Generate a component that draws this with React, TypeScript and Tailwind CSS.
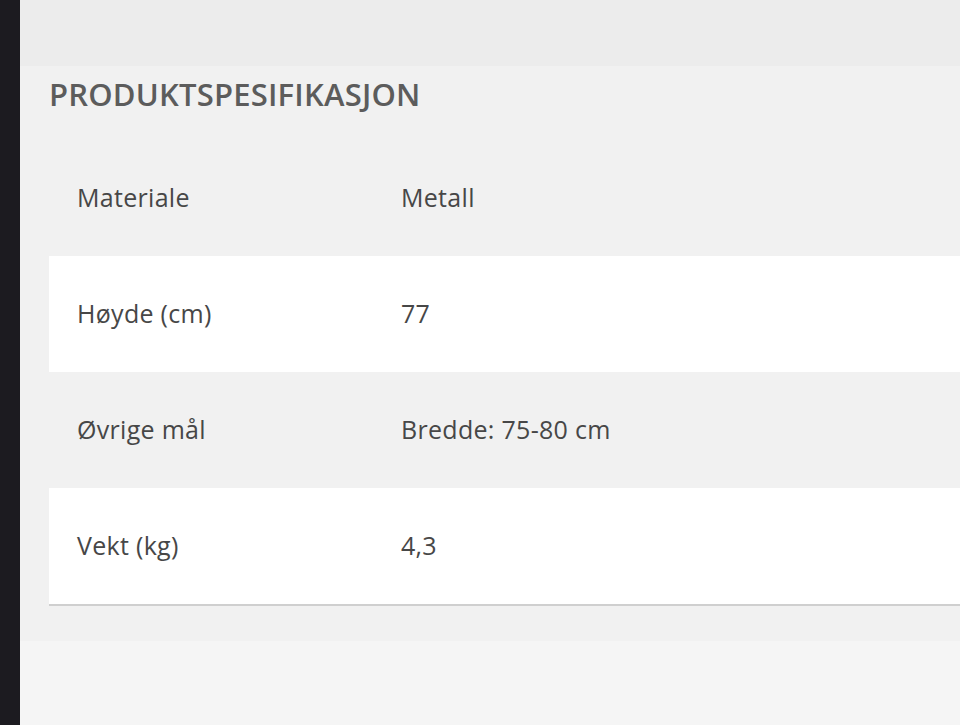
import React from "react";

const rows: { label: string; value: string; white: boolean }[] = [
  { label: "Materiale", value: "Metall", white: false },
  { label: "Høyde (cm)", value: "77", white: true },
  { label: "Øvrige mål", value: "Bredde: 75-80 cm", white: false },
  { label: "Vekt (kg)", value: "4,3", white: true },
];

export default function App() {
  return (
    <div
      className="flex h-[725px] w-[960px] overflow-hidden"
      style={{ fontFamily: '"Open Sans", "Liberation Sans", sans-serif' }}
    >
      <div className="w-[20px] shrink-0 bg-[#1c1b20]" />
      <div className="flex flex-1 flex-col bg-[#f1f1f1]">
        <div className="h-[66px] shrink-0 bg-[#ececec]" />
        <h2 className="ml-[29px] mt-[10px] h-[64px] text-[31px] font-semibold leading-[36px] tracking-[0.2px] text-[#5c5c5c]">
          PRODUKTSPESIFIKASJON
        </h2>
        <div className="ml-[29px] flex flex-col border-b-2 border-[#cfcfcf]">
          {rows.map((r) => (
            <div
              key={r.label}
              className={`flex h-[116px] items-center pl-[28px] text-[25px] tracking-[0.3px] text-[#474747] ${
                r.white ? "bg-white" : "bg-[#f1f1f1]"
              }`}
            >
              <div className="w-[324px] shrink-0">{r.label}</div>
              <div>{r.value}</div>
            </div>
          ))}
        </div>
        <div className="h-[35px] shrink-0" />
        <div className="flex-1 bg-[#f5f5f5]" />
      </div>
    </div>
  );
}
